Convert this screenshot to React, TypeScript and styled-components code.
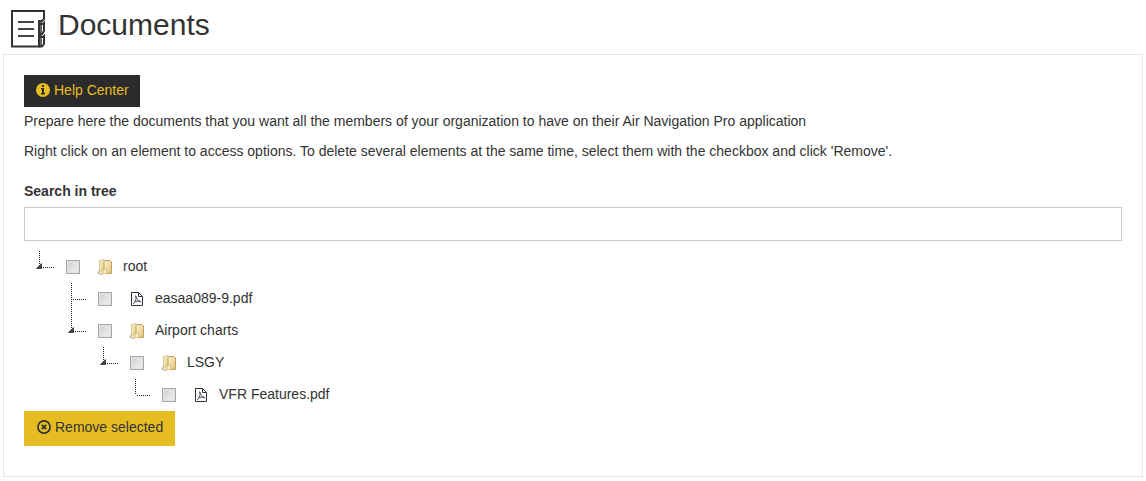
import React from "react";
import styled, { createGlobalStyle } from "styled-components";

const GlobalStyle = createGlobalStyle`
  *, *::before, *::after { box-sizing: border-box; }
  body {
    margin: 0;
    background: #fff;
    color: #333;
    font: 14px/20px "Liberation Sans", Arial, sans-serif;
  }
`;

const Page = styled.div`
  padding: 8px 3px 4px;
`;

const Header = styled.header`
  display: flex;
  gap: 10px;
  height: 46px;
  padding-left: 7px;
`;

const Title = styled.h1`
  margin: 0;
  font-size: 30px;
  font-weight: 400;
  line-height: 33px;
`;

const Panel = styled.main`
  border: 1px solid #e7e7e7;
  padding: 20px 20px 30px;
`;

const Button = styled.button<{ $tone: "dark" | "gold" }>`
  display: flex;
  align-items: center;
  gap: 4px;
  border: 0;
  padding: ${(p) => (p.$tone === "dark" ? "5px 11px 7px 12px" : "6px 12px 9px 13px")};
  background: ${(p) => (p.$tone === "dark" ? "#2b2b2b" : "#e6bd21")};
  color: ${(p) => (p.$tone === "dark" ? "#e6bd21" : "#333")};
  font: inherit;
  cursor: pointer;
`;

const Text = styled.p`
  margin: 0 0 10px;
`;

const Intro = styled.div`
  padding: 4px 0 10px;
`;

const Label = styled.label`
  display: block;
  margin-bottom: 6px;
  font-weight: 700;
`;

const SearchInput = styled.input`
  display: block;
  width: 100%;
  height: 34px;
  margin-bottom: 10px;
  border: 1px solid #ccc;
  border-radius: 0;
  padding: 6px 12px;
  background: #fff;
  color: #555;
  font: inherit;
`;

const Tree = styled.ul`
  margin: 0;
  padding: 0;
  list-style: none;
`;

const Branch = styled(Tree)`
  padding-left: 32px;
`;

const Row = styled.div`
  display: flex;
  height: 32px;
`;

const Cell = styled.span`
  display: flex;
  flex: none;
  width: 32px;
  height: 32px;
  align-items: center;
  justify-content: center;
`;

const IconCell = styled(Cell)`
  padding-left: 2px;
`;

const Name = styled.label`
  padding: 0 3px;
  line-height: 30px;
`;

const Checkbox = styled.input`
  appearance: none;
  width: 14px;
  height: 14px;
  margin: 0 0 0 2px;
  border: 1px solid #a5a5a5;
  background: linear-gradient(135deg, #cfcfcf, #f2f2f2);
  box-shadow: inset 0 0 0 1px #e3e3e3;
  &:checked { background: #777; }
`;

const Toggle = styled.button`
  border: 0;
  padding: 0;
  background: none;
  cursor: pointer;
`;

const Drawing = styled.svg`
  display: block;
  flex: none;
`;

function NotebookIcon() {
  return (
    <Drawing width="38" height="42" viewBox="0 0 38 42" fill="none" stroke="#333" strokeWidth="2">
      <path d="M30 38.500H2V3H34V11L32 13H29V38.500" />
      <path d="M30 16H33L34 15V23L32 26H30" />
      <path d="M30 29H33L34 28V36L32 38.500H29" />
      <path d="M31 13V38" strokeWidth="1.500" />
      <path d="M8 14H24M8 21H24M8 28H24" stroke="#444" />
    </Drawing>
  );
}

function InfoIcon() {
  return (
    <Drawing width="14" height="14" viewBox="0 0 14 14">
      <circle cx="7" cy="7" r="7" fill="currentColor" />
      <path d="M6 2H8V4H6ZM5 5H8V10H9V11.500H5V10H6V6.500H5Z" fill="#2b2b2b" />
    </Drawing>
  );
}

function RemoveIcon() {
  return (
    <Drawing width="14" height="14" viewBox="0 0 14 14" fill="none" stroke="currentColor">
      <circle cx="7" cy="7" r="6.100" strokeWidth="1.700" />
      <path d="M4.800 4.800L9.200 9.200M9.200 4.800L4.800 9.200" strokeWidth="1.900" />
    </Drawing>
  );
}

function FolderIcon() {
  return (
    <Drawing width="16" height="16" viewBox="0 0 16 16">
      <defs>
        <linearGradient id="manila" x1="0" y1="0" x2="1" y2="1">
          <stop offset="0" stopColor="#fbf1d0" />
          <stop offset="1" stopColor="#dfc27a" />
        </linearGradient>
      </defs>
      <path d="M0 13L3 11V15H1Z" fill="#c4c4c4" />
      <path d="M2.500 1.500L7 .5L8 2V14L2.500 15Z" fill="url(#manila)" stroke="#cfb578" strokeWidth=".7" />
      <path d="M7 2.500L8 1.500H13L14.500 3V14.500H10L7 11Z" fill="url(#manila)" stroke="#b3924a" strokeWidth=".8" />
      <path d="M2.500 11.500L5 11V15.500H2.500ZM6 10.500H9.500V15H6Z" fill="#f8edc8" stroke="#c9ad6c" strokeWidth=".5" />
    </Drawing>
  );
}

function PdfIcon() {
  return (
    <Drawing width="16" height="16" viewBox="0 0 16 16" fill="none">
      <path d="M2.500 1.500H9.500L13.500 5.500V14.500H2.500ZM9.500 1.500V5.500H13.500" stroke="#333" />
      <path d="M6.500 4.500C7.500 8 9 10 12 11M7 5C7.500 9 6 11 4 13M5 11.500C7 10 10 9.500 12 10.500" stroke="#4a3552" strokeWidth=".9" />
    </Drawing>
  );
}

function Connector({ open, last }: { open: boolean; last: boolean }) {
  return (
    <Drawing width="32" height="32" viewBox="0 0 32 32" shapeRendering="crispEdges">
      <path
        d={last ? "M15.500 0V16" : "M15.500 0V32"}
        stroke="#222"
        strokeDasharray="1 1"
      />
      <path d="M17 16.500H30" stroke="#222" strokeDasharray="1 1" />
      {open && <path d="M17.500 12.500V17.500H12.500Z" fill="#444" stroke="#222" strokeWidth=".7" shapeRendering="auto" />}
    </Drawing>
  );
}

type TreeNode = { id: string; name: string; children?: TreeNode[] };

const documents: TreeNode = {
  id: "root-folder",
  name: "root",
  children: [
    { id: "easaa", name: "easaa089-9.pdf" },
    {
      id: "charts",
      name: "Airport charts",
      children: [
        { id: "lsgy", name: "LSGY", children: [{ id: "vfr", name: "VFR Features.pdf" }] },
      ],
    },
  ],
};

function TreeItem({ node, last }: { node: TreeNode; last: boolean }) {
  const [open, setOpen] = React.useState(true);
  const { children } = node;
  return (
    <li>
      <Row>
        <Cell>
          {children ? (
            <Toggle type="button" aria-label={`Toggle ${node.name}`} aria-expanded={open} onClick={() => setOpen(!open)}>
              <Connector open={open} last={last} />
            </Toggle>
          ) : (
            <Connector open={false} last={last} />
          )}
        </Cell>
        <Cell>
          <Checkbox type="checkbox" id={node.id} />
        </Cell>
        <IconCell>{children ? <FolderIcon /> : <PdfIcon />}</IconCell>
        <Name htmlFor={node.id}>{node.name}</Name>
      </Row>
      {children && open && (
        <Branch>
          {children.map((child, i) => (
            <TreeItem key={child.id} node={child} last={i === children.length - 1} />
          ))}
        </Branch>
      )}
    </li>
  );
}

export default function App() {
  return (
    <>
      <GlobalStyle />
      <Page>
        <Header>
          <NotebookIcon />
          <Title>Documents</Title>
        </Header>
        <Panel>
          <Button type="button" $tone="dark">
            <InfoIcon />
            Help Center
          </Button>
          <Intro>
            <Text>
              Prepare here the documents that you want all the members of your organization to have on their Air
              Navigation Pro application
            </Text>
            <Text>
              Right click on an element to access options. To delete several elements at the same time, select them
              with the checkbox and click 'Remove'.
            </Text>
          </Intro>
          <Label htmlFor="search">Search in tree</Label>
          <SearchInput id="search" type="text" />
          <Tree>
            <TreeItem node={documents} last />
          </Tree>
          <Button type="button" $tone="gold">
            <RemoveIcon />
            Remove selected
          </Button>
        </Panel>
      </Page>
    </>
  );
}
